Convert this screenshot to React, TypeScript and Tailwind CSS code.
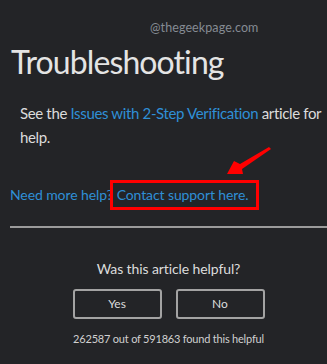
import React from 'react'

export default function App() {
  return (
    <div className="relative w-[327px] h-[364px] overflow-hidden bg-[#232427] text-[#dcdcdc]">
      <div className="font-['Lato',sans-serif]">
        <p className="absolute left-[150px] top-[19px] text-[12.5px] tracking-[0.1px] text-[#858b93]">@thegeekpage.com</p>

        <h1 className="pl-[11px] pt-[42px] text-[32px] leading-[40px] tracking-[-0.9px] text-[#e4e4e4]">Troubleshooting</h1>

        <p className="pl-[20px] mt-[19px] text-[15px] leading-[24px] tracking-[-0.35px]">
          See the <span className="text-[#2f8fd6]">Issues with 2-Step Verification</span> article for help.
        </p>

        <div className="mt-[31px] pl-[10px] flex items-center text-[14px] leading-[22px] tracking-[-0.1px] text-[#2f8fd6]">
          <span>Need more help?</span>
          <span className="-ml-[3px] pl-[4px] pr-[7px] h-[30px] flex items-center border-[3px] border-[#ff0000]">Contact support here.</span>
        </div>

        <div className="mt-[16px] ml-[10px] h-[2px] bg-[#9b9b9b]" />

        <div className="mt-[31px] flex flex-col items-center">
          <p className="text-[14px] leading-[20px] tracking-[-0.1px] text-[#dcdcdc] ml-[10px]">Was this article helpful?</p>
          <div className="mt-[10px] ml-[10px] flex gap-[14px]">
            <button className="w-[89px] h-[30px] rounded-[3px] border-2 border-[#a3a3a3] text-[12px] text-[#dcdcdc]">Yes</button>
            <button className="w-[89px] h-[30px] rounded-[3px] border-2 border-[#a3a3a3] text-[12px] text-[#dcdcdc]">No</button>
          </div>
          <p className="mt-[12px] ml-[10px] text-[11px] leading-[16px] tracking-[-0.2px] text-[#d0d0d0]">262587 out of 591863 found this helpful</p>
        </div>
      </div>

      <svg className="absolute left-0 top-0" width="327" height="364" viewBox="0 0 327 364">
        <polygon points="269,147 240,164 234,161 227,174 243,174 242,169 271,149" fill="#ff0000" />
      </svg>
    </div>
  )
}
